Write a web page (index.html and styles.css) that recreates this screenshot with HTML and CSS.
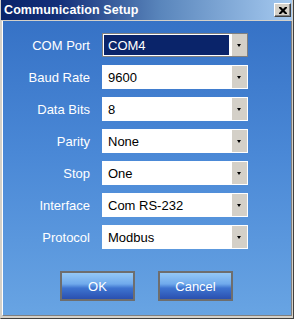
FILE: index.html
```html
<!DOCTYPE html>
<html lang="en">
<head>
    <meta charset="UTF-8">
    <title>Communication Setup</title>
    <link rel="stylesheet" href="styles.css">
</head>
<body>
    <div class="window">
        <!-- Title bar -->
        <div class="titlebar">
            <span class="title">Communication Setup</span>
            <span class="close-btn">
                <svg width="8" height="7" viewBox="0 0 8 7"><path d="M0 0h2l2 2 2-2h2v1l-2.5 2.5 2.5 2.5v1h-2l-2-2-2 2h-2v-1l2.5-2.5-2.5-2.5z" fill="#000"/></svg>
            </span>
        </div>

        <!-- Settings form -->
        <div class="client">
            <div class="fields">
                <label>COM Port</label>
                <div class="combo combo--focus"><span class="value">COM4</span><span class="arrow"></span></div>
                <label>Baud Rate</label>
                <div class="combo"><span class="value">9600</span><span class="arrow"></span></div>
                <label>Data Bits</label>
                <div class="combo"><span class="value">8</span><span class="arrow"></span></div>
                <label>Parity</label>
                <div class="combo"><span class="value">None</span><span class="arrow"></span></div>
                <label>Stop</label>
                <div class="combo"><span class="value">One</span><span class="arrow"></span></div>
                <label>Interface</label>
                <div class="combo"><span class="value">Com RS-232</span><span class="arrow"></span></div>
                <label>Protocol</label>
                <div class="combo"><span class="value">Modbus</span><span class="arrow"></span></div>
            </div>

            <div class="buttons">
                <button class="btn">OK</button>
                <button class="btn">Cancel</button>
            </div>
        </div>
    </div>
</body>
</html>
```

FILE: styles.css
```css
/* Basic Styling */
body {
    margin: 0;
    padding: 0;
    font-family: "Liberation Sans", Arial, sans-serif;
    background-color: #d4d0c8;
}

.window {
    width: 294px;
    height: 319px;
    box-sizing: border-box;
    border-left: 1px solid #d4d0c8;
    border-right: 1px solid #404040;
    border-bottom: 1px solid #404040;
    background-color: #d4d0c8;
    display: flex;
    flex-direction: column;
}

.titlebar {
    height: 20px;
    margin-right: 1px;
    background: linear-gradient(to right, #0a246a 0%, #14307a 20%, #5a86bc 55%, #a6caf0 100%);
    display: flex;
    align-items: center;
    justify-content: space-between;
    padding: 0 1px 0 3px;
    border-bottom: 1px solid #d4d0c8;
}

.title {
    color: #fff;
    font-weight: bold;
    font-size: 12.5px;
    letter-spacing: 0.1px;
}

.close-btn {
    width: 17px;
    height: 14px;
    box-sizing: border-box;
    background-color: #d4d0c8;
    border-top: 1px solid #fff;
    border-left: 1px solid #fff;
    border-right: 1px solid #404040;
    border-bottom: 1px solid #404040;
    box-shadow: inset -1px -1px 0 #808080;
    display: flex;
    align-items: center;
    justify-content: center;
}

.client {
    flex: 1;
    margin: 0 1px 2px 1px;
    border-left: 1px solid #fff;
    border-right: 1px solid #808080;
    border-bottom: 1px solid #808080;
    background: linear-gradient(to bottom, #3672c6 0%, #4a88d6 45%, #68a4e3 100%);
    padding-top: 12px;
}

.fields {
    display: grid;
    grid-template-columns: 87px 146px;
    grid-auto-rows: 24px;
    column-gap: 12px;
    row-gap: 8px;
}

label {
    color: #fff;
    font-size: 13px;
    text-align: right;
    align-self: center;
}

.combo {
    box-sizing: border-box;
    background-color: #fff;
    border: 1px solid #fff;
    display: flex;
    align-items: stretch;
}

.combo .value {
    flex: 1;
    font-size: 13px;
    color: #000;
    padding-left: 5px;
    display: flex;
    align-items: center;
}

.combo .arrow {
    width: 15px;
    background-color: #d4d0c8;
    position: relative;
}

.combo .arrow::after {
    content: "";
    position: absolute;
    left: 5px;
    top: 10px;
    border-left: 2.5px solid transparent;
    border-right: 2.5px solid transparent;
    border-top: 3px solid #000;
}

.combo--focus {
    border: 1px solid #808080;
}

.combo--focus .value {
    background-color: #0a246a;
    color: #fff;
    margin: 1px 3px 1px 1px;
    padding-left: 4px;
}

.buttons {
    display: flex;
    gap: 23px;
    padding-left: 57px;
    margin-top: 22px;
}

.btn {
    width: 75px;
    height: 30px;
    box-sizing: border-box;
    border: 2px solid #6e6e6e;
    background: linear-gradient(to bottom, #94c8f6 0%, #70aaec 42%, #3e74d0 58%, #2a50b0 100%);
    color: #fff;
    font-family: "Liberation Sans", Arial, sans-serif;
    font-size: 13px;
    padding: 0;
    cursor: pointer;
}
```
